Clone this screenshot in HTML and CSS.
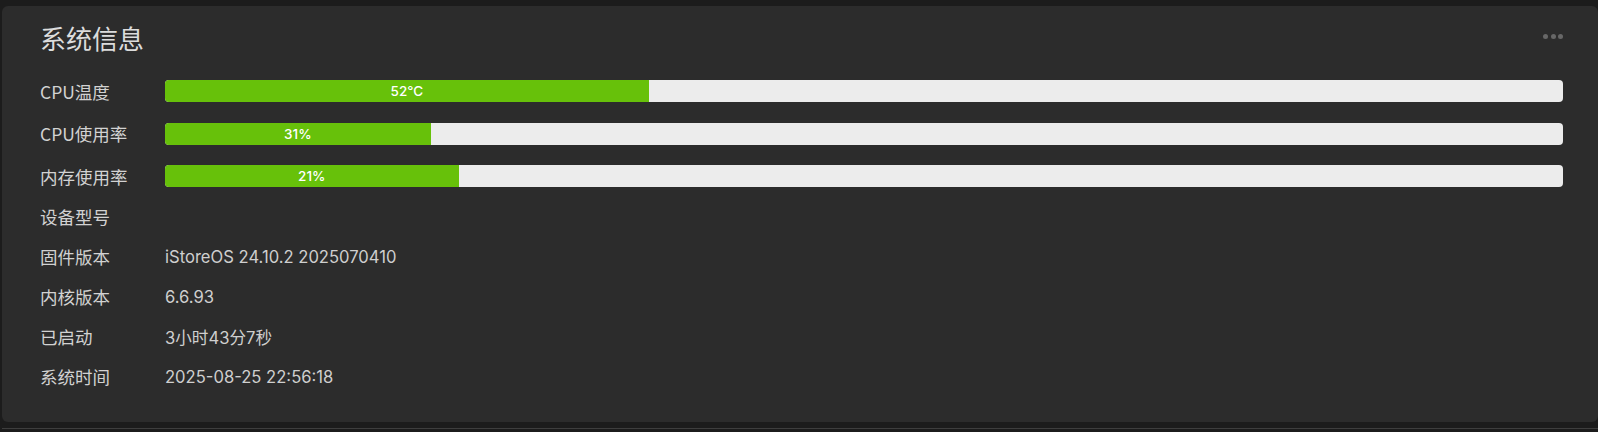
FILE: index.html
```html
<!DOCTYPE html>
<html lang="zh-CN">
<head>
<meta charset="utf-8">
<title>系统信息</title>
<link rel="stylesheet" href="styles.css">
</head>
<body>
<div class="page">
  <section class="card">
    <header class="card-head">
      <h2 class="title">系统信息</h2>
      <span class="more"><i></i><i></i><i></i></span>
    </header>
    <div class="bars">
      <div class="row bar-row">
        <span class="label">CPU温度</span>
        <div class="track"><div class="fill" style="width:34.6%"><span>52℃</span></div></div>
      </div>
      <div class="row bar-row">
        <span class="label">CPU使用率</span>
        <div class="track"><div class="fill" style="width:19%"><span>31%</span></div></div>
      </div>
      <div class="row bar-row">
        <span class="label">内存使用率</span>
        <div class="track"><div class="fill" style="width:21%"><span>21%</span></div></div>
      </div>
    </div>
    <div class="info">
      <div class="row">
        <span class="label">设备型号</span>
        <span class="value"></span>
      </div>
      <div class="row">
        <span class="label">固件版本</span>
        <span class="value">iStoreOS 24.10.2 2025070410</span>
      </div>
      <div class="row">
        <span class="label">内核版本</span>
        <span class="value">6.6.93</span>
      </div>
      <div class="row">
        <span class="label">已启动</span>
        <span class="value">3小时43分7秒</span>
      </div>
      <div class="row">
        <span class="label">系统时间</span>
        <span class="value">2025-08-25 22:56:18</span>
      </div>
    </div>
  </section>
  <div class="rule"></div>
</div>
</body>
</html>
```
FILE: styles.css
```css
html, body {
  margin: 0;
  padding: 0;
  background: #1c1c1c;
  height: 100%;
  overflow: hidden;
}
.page {
  padding: 6px 0 0 2px;
}
.card {
  background: #2c2c2c;
  border-radius: 6px;
  padding: 13px 35px 16px 38px;
  height: 416px;
  box-sizing: border-box;
  font-family: "Noto Sans CJK SC", "Noto Sans", sans-serif;
}
.card-head {
  display: flex;
  justify-content: space-between;
  align-items: center;
  height: 38px;
}
.title {
  margin: 0;
  font-size: 26px;
  font-weight: 400;
  color: #dcdcdc;
  line-height: 38px;
}
.more {
  display: flex;
  gap: 2.5px;
  align-self: flex-start;
  margin-top: 15px;
}
.more i {
  width: 5px;
  height: 5px;
  border-radius: 50%;
  background: #676767;
}
.bars {
  display: flex;
  flex-direction: column;
  margin-top: 13px;
}
.info {
  display: flex;
  flex-direction: column;
  margin-top: -1px;
}
.row {
  display: flex;
  align-items: center;
  height: 40px;
}
.bar-row {
  height: 42.6px;
}
.label {
  width: 125px;
  flex: none;
  font-size: 17.5px;
  color: #d2d2d2;
}
.value {
  font-family: Inter, "Noto Sans CJK SC", sans-serif;
  font-size: 16.6px;
  color: #cfcfcf;
}
.track {
  flex: 1;
  height: 22px;
  background: #ececec;
  border-radius: 4px;
  overflow: hidden;
  display: flex;
}
.fill {
  background: #67c10a;
  height: 100%;
  display: flex;
  align-items: center;
  justify-content: center;
}
.fill span {
  font-family: Inter, "Noto Sans CJK SC", sans-serif;
  font-size: 13.5px;
  font-weight: 500;
  color: #ffffff;
}
.rule {
  margin-top: 6px;
  height: 1px;
  background: #3e3e3e;
}
```
